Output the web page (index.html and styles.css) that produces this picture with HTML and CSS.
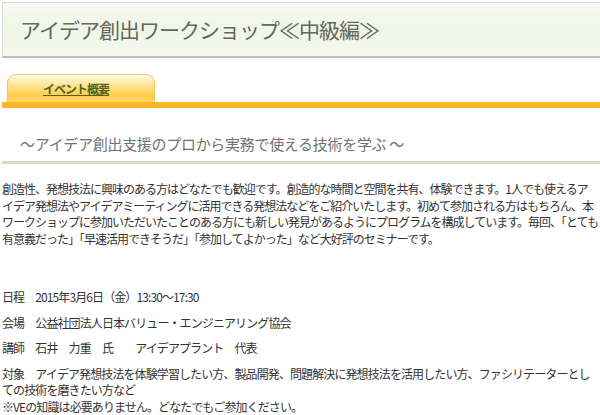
FILE: index.html
```html
<!DOCTYPE html>
<html lang="ja">
<head>
<meta charset="utf-8">
<title>アイデア創出ワークショップ≪中級編≫</title>
<link rel="stylesheet" href="styles.css">
</head>
<body>
<div class="page">
  <header class="title-box">
    <h1 class="title">アイデア創出ワークショップ≪中級編≫</h1>
  </header>
  <nav class="tabs">
    <a class="tab" href="#">イベント概要</a>
  </nav>
  <h2 class="subtitle">～アイデア創出支援のプロから実務で使える技術を学ぶ ～</h2>
  <p class="intro">創造性、発想技法に興味のある方はどなたでも歓迎です。創造的な時間と空間を共有、体験できます。1人でも使えるア<span class="nobr">イデア</span>発想法やアイデアミーティングに活用できる発想法などをご紹介いたします。初めて参加される方はもちろん、本ワークショップに参加いただいたことのある方にも新しい発見があるようにプログラムを構成しています。毎回、「とても有意義だった」「早速活用できそうだ」「参加してよかった」など大好評のセミナーです。</p>
  <div class="details">
    <p class="item">日程　2015年3月6日（金）13:30～17:30</p>
    <p class="item">会場　公益社団法人日本バリュー・エンジニアリング協会</p>
    <p class="item">講師　石井　力重　氏　　アイデアプラント　代表</p>
    <p class="item">対象　アイデア発想技法を体験学習したい方、製品開発、問題解決に発想技法を活用したい方、ファシリテーターとしての技術を磨きたい方など<br>※VEの知識は必要ありません。どなたでもご参加ください。</p>
  </div>
</div>
</body>
</html>
```

FILE: styles.css
```css
html, body {
  margin: 0;
  padding: 0;
  background: #ffffff;
}

body {
  font-family: "Noto Sans CJK JP", "Noto Sans", sans-serif;
  color: #333333;
  overflow: hidden;
}

.page {
  padding: 2px 0 0 2px;
}

.title-box {
  border-top: 1px solid #dcdcdc;
  border-left: 1px solid #dcdcdc;
  border-bottom: 2px solid #bdbdbd;
  background: linear-gradient(#f8faf2 0%, #eef6e6 50%, #f6f8ee 100%);
  height: 53px;
  display: flex;
  align-items: center;
  padding-left: 17px;
}

.title {
  margin: 0;
  font-size: 21px;
  font-weight: normal;
  letter-spacing: -1px;
  color: #666659;
  line-height: 1;
}

.tabs {
  margin-top: 16px;
  padding-left: 5px;
  border-bottom: 6px solid #fbb72b;
  display: flex;
}

.tab {
  width: 148px;
  height: 28px;
  border: 1px solid #f2c35a;
  border-bottom: none;
  border-radius: 9px 9px 0 0;
  background: linear-gradient(#fffbe8 0%, #ffe9a6 30%, #ffcd4a 75%, #ffd565 100%);
  display: flex;
  align-items: center;
  justify-content: center;
  font-size: 12px;
  font-weight: bold;
  letter-spacing: -1px;
  color: #4f6220;
  text-decoration: underline;
  padding-right: 10px;
  box-sizing: border-box;
}

.subtitle {
  margin: 0;
  padding: 27px 0 0 18px;
  height: 26px;
  font-size: 15px;
  font-weight: normal;
  color: #727272;
  letter-spacing: -0.3px;
  line-height: 18px;
  border-bottom: 3px solid #d9dcc5;
}

.intro {
  margin: 17px 0 0 0;
  font-size: 12px;
  line-height: 16.5px;
  letter-spacing: -1px;
}

.nobr {
  white-space: nowrap;
}

.details {
  margin-top: 42px;
  display: flex;
  flex-direction: column;
  gap: 9px;
}

.item {
  margin: 0;
  font-size: 12px;
  line-height: 16.5px;
  letter-spacing: -0.9px;
}
```
